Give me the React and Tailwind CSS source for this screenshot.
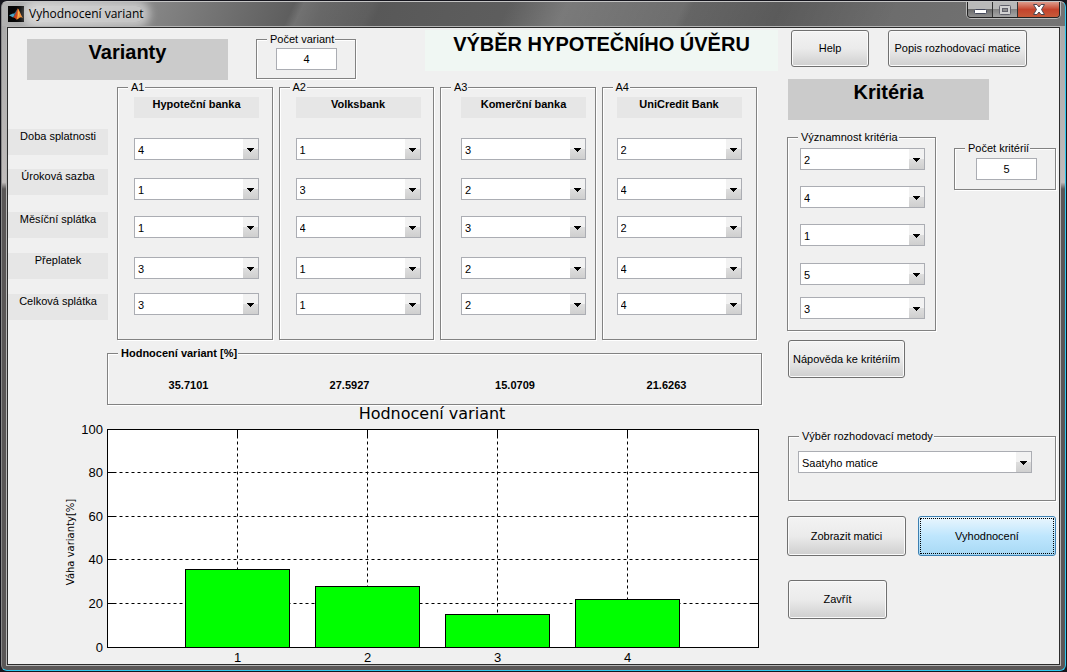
import React from 'react'

const variants = [
  { id: 'A1', bank: 'Hypoteční banka', values: [4, 1, 1, 3, 3], pad: 'pl-4' },
  { id: 'A2', bank: 'Volksbank', values: [1, 3, 4, 1, 1], pad: 'pl-4' },
  { id: 'A3', bank: 'Komerční banka', values: [3, 2, 3, 2, 2], pad: 'pl-5' },
  { id: 'A4', bank: 'UniCredit Bank', values: [2, 4, 2, 4, 4], pad: 'pl-[14px]' },
]

const criteria = [
  'Doba splatnosti',
  'Úroková sazba',
  'Měsíční splátka',
  'Přeplatek',
  'Celková splátka',
]

const weights = [2, 4, 1, 5, 3]
const results = [35.7101, 27.5927, 15.0709, 21.6263]

function Group({ title, className, bold, children }) {
  return (
    <fieldset
      className={`min-w-0 border border-[#828282] shadow-[1px_1px_0_#fff,inset_1px_1px_0_#fff] ${className}`}
    >
      <legend
        className={`ml-[10px] h-3 bg-[#f0f0f0] pl-[3px] pr-px leading-3 ${bold ? 'font-bold' : ''}`}
      >
        {title}
      </legend>
      {children}
    </fieldset>
  )
}

function Dropdown({ label, value, options, className = 'w-[125px]' }) {
  return (
    <div className={`relative h-[22px] ${className}`}>
      <select
        aria-label={label}
        defaultValue={value}
        className="block h-full w-full appearance-none border border-[#abadb3] bg-white pl-[3px] pr-5 pt-0.5"
      >
        {options.map((o) => (
          <option key={o} value={o}>
            {o}
          </option>
        ))}
      </select>
      <span className="pointer-events-none absolute inset-y-px right-px flex w-[15px] items-center justify-center bg-linear-to-b from-[#f2f2f2] from-50% via-[#dedede] via-50% to-[#cfcfcf] pt-0.5">
        <svg width="7" height="4" viewBox="0 0 7 4" shapeRendering="crispEdges">
          <path d="M0 0h7v1H6v1H5v1H4v1H3V3H2V2H1V1H0z" fill="#000" />
        </svg>
      </span>
    </div>
  )
}

function NumberBox({ label, value }) {
  return (
    <input
      type="text"
      aria-label={label}
      defaultValue={value}
      className="block h-[22px] w-[61px] border border-[#abadb3] bg-white text-center"
    />
  )
}

function Button({ className, children }) {
  return (
    <button
      type="button"
      className={`whitespace-nowrap rounded-[3px] border border-[#707070] bg-linear-to-b from-[#f3f3f3] from-0% via-[#ebebeb] via-50% to-[#cfcfcf] shadow-[inset_0_0_0_1px_#fafafa] ${className}`}
    >
      {children}
    </button>
  )
}

function MatlabIcon() {
  return (
    <svg width="16" height="16" viewBox="0 0 16 16">
      <rect width="16" height="16" fill="#050505" />
      <path d="M1 9.3 5 7.4 7.2 8.8 5 11.6z" fill="#4aa3c4" />
      <path d="M5 7.4 6.8 6.8 9.8 2.5 7.8 8.8 7.2 8.8z" fill="#2b6d8c" />
      <path d="M5 11.6C7 10 8 6 9.8 2.5c1 1 1.2 3 1.6 5.3L8.3 13.6C7.5 12.5 6.5 11.3 5 11.6z" fill="#c8401c" />
      <path d="M9.8 2.5c1.5 1 2.7 6 5.2 9.5-1.5-1-2.5-1-3.6-.2-1 .9-2 1.8-3.1 1.8C9.8 11 9.5 6 9.8 2.5z" fill="#f28a2a" />
      <path d="M9.8 3.5c.8 2 .8 5-.3 8.5 1-1 1.5-3.5 1.3-6z" fill="#ffd65a" />
    </svg>
  )
}

function TitleBar() {
  return (
    <header className="flex h-6 items-start bg-linear-110 from-[#b4b4b4] from-0% via-[#565656] via-30% to-[#747474]">
      <div className="flex h-6 flex-1 items-center gap-[5px] bg-[linear-gradient(115deg,transparent_30%,#ffffff22_31%,#ffffff0a_38%,transparent_39%,transparent_52%,#ffffff2a_58%,#ffffff10_70%,transparent_71%,#00000022_80%,transparent_92%)] pl-[6px]">
        <MatlabIcon />
        <h1 className="rounded-full bg-white/50 font-['Open_Sans','Noto_Sans',sans-serif] text-[12px] leading-4 text-black shadow-[0_0_8px_6px_#ffffff80]">
          Vyhodnocení variant
        </h1>
      </div>
      <div className="mr-[5px] flex h-4 overflow-hidden rounded-b-[4px] border border-t-0 border-[#222] shadow-[0_0_0_1px_#b9b9b9]">
        <button
          type="button"
          aria-label="Minimalizovat"
          className="flex w-[25px] items-center justify-center border-r border-[#333] bg-linear-to-b from-[#b9b9b9] from-50% via-[#6b6b6b] via-50% to-[#8f8f8f]"
        >
          <svg width="13" height="10" viewBox="0 0 13 10">
            <rect x="0.5" y="4.5" width="12" height="4" rx="1" fill="#fff" stroke="#44485a" />
          </svg>
        </button>
        <button
          type="button"
          aria-label="Maximalizovat"
          className="flex w-[25px] items-center justify-center border-r border-[#333] bg-linear-to-b from-[#b9b9b9] from-50% via-[#858585] via-50% to-[#a5a5a5]"
        >
          <svg width="12" height="10" viewBox="0 0 12 10">
            <rect x="0.5" y="0.5" width="11" height="9" rx="1" fill="#d2d2d2" stroke="#62626c" />
            <rect x="3.5" y="3.5" width="5" height="3" fill="#8d8d8d" stroke="#62626c" />
          </svg>
        </button>
        <button
          type="button"
          aria-label="Zavřít okno"
          className="flex w-[41px] items-center justify-center bg-linear-to-b from-[#dd9a8a] from-0% via-[#c4432c] via-50% to-[#c65a3a]"
        >
          <svg width="12" height="11" viewBox="0 0 12 11">
            <path
              d="M0.5 0.5h3.5l2 2.5 2-2.5h3.5L8.5 5.5l3 5H8L6 8l-2 2.5H0.5L3.5 5.5z"
              fill="#fff"
              stroke="#4c4650"
            />
          </svg>
        </button>
      </div>
    </header>
  )
}

// edges of the axes and distance between bars
const X0 = 99.5
const X1 = 750.5
const Y0 = 242.5
const Y1 = 24.5
const STEP = 130

function Chart() {
  const yAt = (v) => Math.floor(Y0 - (v * (Y0 - Y1)) / 100 - 0.5) + 0.5
  const xAt = (i) => X0 + STEP * (i + 1)

  return (
    <svg
      viewBox="0 0 770 259"
      className="block w-full overflow-visible"
      role="img"
      aria-label="Hodnocení variant"
      fontFamily="'Liberation Sans', sans-serif"
      fontSize="13"
    >
      <text x="424" y="14" textAnchor="middle" fontSize="16" fontFamily="'DejaVu Sans', sans-serif">
        Hodnocení variant
      </text>
      <text
        transform="translate(66 137) rotate(-90)"
        textAnchor="middle"
        fontSize="10"
        fontFamily="'DejaVu Sans', sans-serif"
      >
        Váha varianty[%]
      </text>
      <rect x={X0} y={Y1} width={X1 - X0} height={Y0 - Y1} fill="#fff" />
      <g stroke="#000">
        {[20, 40, 60, 80].map((v) => (
          <g key={v}>
            <path d={`M${X0} ${yAt(v)}H${X1}`} strokeDasharray="3 3" />
            <path d={`M${X0} ${yAt(v)}h8M${X1} ${yAt(v)}h-8`} />
          </g>
        ))}
        {results.map((r, i) => (
          <g key={i}>
            <path d={`M${xAt(i)} ${Y1}V${Y0}`} strokeDasharray="3 3" />
            <path d={`M${xAt(i)} ${Y1}v8`} />
            <rect x={xAt(i) - 52} y={yAt(r)} width="104" height={Y0 - yAt(r)} fill="#0f0" />
          </g>
        ))}
        <rect x={X0} y={Y1} width={X1 - X0} height={Y0 - Y1} fill="none" />
      </g>
      {[0, 20, 40, 60, 80, 100].map((v) => (
        <text key={v} x="95" y={yAt(v) + 4} textAnchor="end">
          {v}
        </text>
      ))}
      {results.map((r, i) => (
        <text key={i} x={xAt(i)} y="257" textAnchor="middle">
          {i + 1}
        </text>
      ))}
    </svg>
  )
}

function VariantPanel({ variant }) {
  return (
    <Group title={variant.id} className="flex-1">
      <div className={variant.pad}>
        <h3 className="mt-1 h-[21px] w-[125px] bg-[#e6e6e6] text-center font-bold leading-[15px]">
          {variant.bank}
        </h3>
        <div className="mt-5 grid grid-rows-[40px_38px_41px_36px_22px]">
          {variant.values.map((v, i) => (
            <Dropdown
              key={i}
              label={`${variant.bank} – ${criteria[i]}`}
              value={v}
              options={[1, 2, 3, 4]}
            />
          ))}
        </div>
      </div>
    </Group>
  )
}

function Variants() {
  return (
    <section className="min-w-0 flex-1">
      <div className="flex h-[53px] items-start">
        <h2 className="ml-[19px] mt-[11px] h-[41px] w-[201px] bg-[#cbcbcb] text-center text-[20px] font-bold leading-[26px]">
          Varianty
        </h2>
        <Group title="Počet variant" className="ml-7 mt-[5px] h-[46px] w-[100px]">
          <div className="pl-[19px] pt-[3px]">
            <NumberBox label="Počet variant" value="4" />
          </div>
        </Group>
        <h2 className="ml-[69px] mt-0.5 h-[41px] flex-1 whitespace-nowrap bg-[#f0f7f3] text-center text-[20px] font-bold leading-[28px]">
          VÝBĚR HYPOTEČNÍHO ÚVĚRU
        </h2>
      </div>

      <div className="flex pr-[21px]">
        <ul className="mr-[9px] mt-12 grid w-[100px] grid-rows-[40px_43px_41px_41px_26px] self-start">
          {criteria.map((c) => (
            <li key={c} className="h-[26px] bg-[#e6e6e6] text-center leading-[14px]">
              {c}
            </li>
          ))}
        </ul>
        <div className="flex h-[259px] flex-1 gap-[6px]">
          {variants.map((v) => (
            <VariantPanel key={v.id} variant={v} />
          ))}
        </div>
      </div>

      <Group title="Hodnocení variant [%]" bold className="ml-[99px] mr-4 mt-[7px] h-[58px]">
        <div className="grid grid-cols-[161px_161px_170px_1fr] pr-7 pt-[18px] text-center font-bold leading-4">
          {results.map((r) => (
            <output key={r}>{r}</output>
          ))}
        </div>
      </Group>

      <Chart />
    </section>
  )
}

function Criteria() {
  return (
    <aside className="w-[281px] shrink-0 pl-[9px]">
      <div className="flex gap-[19px] pl-1 pt-0.5">
        <Button className="h-[37px] w-[78px]">Help</Button>
        <Button className="h-[37px] w-[139px]">Popis rozhodovací matice</Button>
      </div>

      <h2 className="ml-px mt-3 h-[41px] w-[201px] bg-[#cbcbcb] text-center text-[20px] font-bold leading-[26px]">
        Kritéria
      </h2>

      <div className="mt-[11px] flex items-start gap-[18px]">
        <Group title="Významnost kritéria" className="h-[200px] w-[149px]">
          <div className="grid grid-rows-[38px_38px_39px_34px_22px] pl-3 pt-[5px]">
            {weights.map((w, i) => (
              <Dropdown
                key={i}
                label={`Významnost – ${criteria[i]}`}
                value={w}
                options={[1, 2, 3, 4, 5]}
              />
            ))}
          </div>
        </Group>
        <Group title="Počet kritérií" className="mt-[11px] h-12 w-[102px]">
          <div className="pl-[21px] pt-1">
            <NumberBox label="Počet kritérií" value="5" />
          </div>
        </Group>
      </div>

      <Button className="ml-px mt-[9px] block h-[38px] w-[117px]">Nápověda ke kritériím</Button>

      <Group title="Výběr rozhodovací metody" className="ml-px mr-[3px] mt-[52px] h-[71px]">
        <div className="pl-[9px] pt-[9px]">
          <Dropdown
            label="Výběr rozhodovací metody"
            value="Saatyho matice"
            options={['Saatyho matice']}
            className="w-[234px]"
          />
        </div>
      </Group>

      <div className="mt-[15px] flex gap-3">
        <Button className="h-10 w-[119px]">Zobrazit matici</Button>
        <button
          type="button"
          className="h-10 w-[138px] rounded-[3px] border border-[#3c7fb1] bg-linear-to-b from-[#eaf6fd] from-0% via-[#bee6fd] via-50% to-[#a7d9f5] p-px"
        >
          <span className="flex h-full items-center justify-center border border-dotted border-black">
            Vyhodnocení
          </span>
        </button>
      </div>

      <Button className="ml-px mt-6 block h-[39px] w-[99px]">Zavřít</Button>
    </aside>
  )
}

export default function App() {
  return (
    <div className="flex min-h-screen flex-col bg-[#15151d] p-px font-['Liberation_Sans',Arial,sans-serif] text-[11px] text-black">
      <div className="flex flex-1 flex-col overflow-hidden rounded-[6px] border border-b-[#2fc8ee] border-l-[#8a8a8a] border-r-[#2fc8ee] border-t-[#c4c4c4] bg-linear-to-b from-[#a8a8a8] from-0% via-[#c0bcbb] via-27% to-[#5a5757] to-28%">
        <TitleBar />
        <main className="mx-1 mb-1 flex flex-1 border border-[#b5b5b5]">
          <div className="flex min-w-0 flex-1 border border-[#2c2c2c] bg-[#f0f0f0]">
            <Variants />
            <Criteria />
          </div>
        </main>
      </div>
    </div>
  )
}
